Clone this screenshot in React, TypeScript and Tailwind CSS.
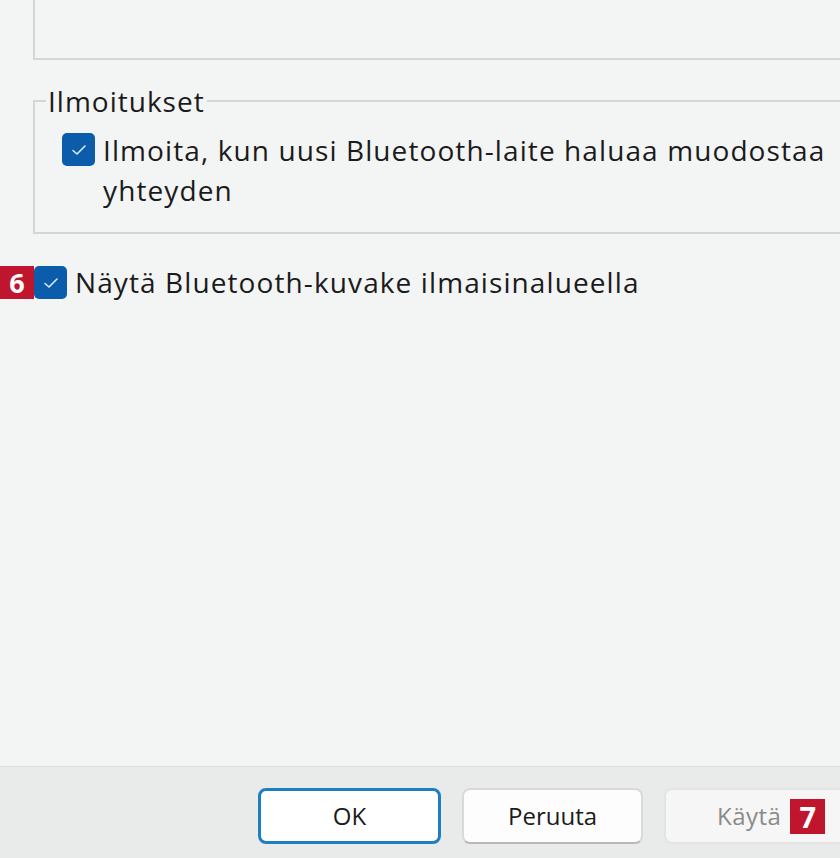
import React from "react";

const font = { fontFamily: '"Open Sans", "Noto Sans", sans-serif' };

function Check({ className = "" }: { className?: string }) {
  return (
    <div className={"flex h-[33px] w-[33px] shrink-0 items-center justify-center rounded-[5px] bg-[#0b5cab] " + className}>
      <svg width="16" height="12" viewBox="0 0 16 12" fill="none">
        <path d="M2 6.5 L6 10 L14 2" stroke="#e8f1fb" strokeWidth="1.5" strokeLinecap="round" strokeLinejoin="round" />
      </svg>
    </div>
  );
}

export default function App() {
  return (
    <div className="flex h-[858px] w-[840px] flex-col overflow-hidden bg-[#f3f4f4] text-[28px] tracking-[1.1px] text-[#1b1b1b]" style={font}>
      <div className="ml-[33px] mr-[-10px] h-[60px] shrink-0 border-b-2 border-l-2 border-[#d4d5d5]" />
      <fieldset className="ml-[33px] mr-[-10px] mt-[26px] h-[148px] shrink-0 border-2 border-[#d4d5d5]">
        <legend className="ml-[11px] px-[2px] leading-[30px] tracking-[1px]">Ilmoitukset</legend>
        <div className="mt-[17px] flex items-start gap-[8px] pl-[27px]">
          <Check />
          <div className="-mt-[3px] leading-[40px]">
            Ilmoita, kun uusi Bluetooth-laite haluaa muodostaa
            <br />
            yhteyden
          </div>
        </div>
      </fieldset>
      <div className="mt-[32px] flex items-center">
        <div className="flex h-[33px] w-[34px] items-center justify-center bg-[#c0162d] text-[27px] font-bold leading-none tracking-normal text-white">6</div>
        <Check />
        <span className="ml-[8px] leading-[33px]">Näytä Bluetooth-kuvake ilmaisinalueella</span>
      </div>
      <div className="flex-1" />
      <div className="flex h-[92px] shrink-0 items-start gap-[21px] border-t border-[#dddede] bg-[#e9eaea] pl-[258px] pt-[21px] text-[24px] tracking-normal">
        <button className="flex h-[56px] w-[183px] shrink-0 items-center justify-center rounded-[8px] border-[3px] border-[#1c7fc2] bg-white">OK</button>
        <button className="flex h-[56px] w-[181px] shrink-0 items-center justify-center rounded-[8px] border-2 border-[#d9d9d9] border-b-[#b9b9b9] bg-[#fdfdfd]">Peruuta</button>
        <div className="flex h-[56px] w-[200px] shrink-0 items-center rounded-[8px] border-2 border-[#e4e4e4] bg-[#f6f6f6] pl-[51px] text-[#8a8a8a] tracking-[0.5px]">
          Käytä
          <span className="ml-[9px] flex h-[35px] w-[35px] items-center justify-center bg-[#c0162d] text-[29px] font-bold leading-none text-white">7</span>
        </div>
      </div>
    </div>
  );
}
